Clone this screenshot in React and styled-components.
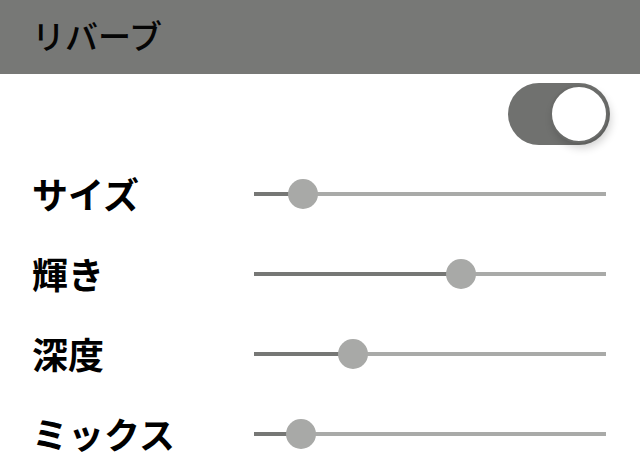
import React, { useState } from "react"
import styled, { createGlobalStyle } from "styled-components"

const GlobalStyle = createGlobalStyle`
  html, body {
    margin: 0;
    padding: 0;
    background: #ffffff;
    font-family: "Noto Sans CJK JP", "Noto Sans", sans-serif;
  }
`

const Screen = styled.div`
  width: 640px;
  height: 472px;
  overflow: hidden;
  background: #ffffff;
`

const Header = styled.header`
  height: 74px;
  background-color: #777876;
  display: flex;
  align-items: center;
  padding-left: 32px;
`

const Title = styled.h1`
  margin: 0;
  font-size: 33px;
  font-weight: 500;
  color: #050505;
  line-height: 1;
  padding-bottom: 3px;
`

const ToggleRow = styled.div`
  height: 80px;
  display: flex;
  align-items: center;
  justify-content: flex-end;
  padding-right: 30px;
`

const Switch = styled.button`
  position: relative;
  width: 102px;
  height: 62px;
  border: none;
  padding: 0;
  border-radius: 31px;
  background-color: ${(p) => (p.$on ? "#70716f" : "#c8c8c8")};
  cursor: pointer;
`

const Knob = styled.span`
  position: absolute;
  top: 2px;
  left: ${(p) => (p.$on ? "42px" : "2px")};
  width: 54px;
  height: 54px;
  border-radius: 50%;
  background: #ffffff;
  border: 2px solid #6a6b69;
  box-shadow: 3px 5px 8px rgba(0, 0, 0, 0.18);
`

const Row = styled.div`
  height: 80px;
  display: grid;
  grid-template-columns: 222px 1fr;
  align-items: center;
  padding: 0 34px 0 32px;
`

const Label = styled.span`
  font-size: 36px;
  font-weight: 700;
  color: #000000;
  line-height: 1;
  padding-bottom: 2px;
`

const Track = styled.div`
  position: relative;
  height: 4px;
  background-color: #a9aaa8;
`

const Fill = styled.div`
  height: 100%;
  background-color: #767775;
`

const Thumb = styled.div`
  position: absolute;
  top: 50%;
  width: 30px;
  height: 30px;
  margin-left: -15px;
  margin-top: -15px;
  border-radius: 50%;
  background-color: #a8a9a7;
`

const Slider = ({ value }) => (
  <Track>
    <Fill style={{ width: `${value}%` }} />
    <Thumb style={{ left: `${value}%` }} />
  </Track>
)

const params = [
  { name: "サイズ", value: 14 },
  { name: "輝き", value: 58.8 },
  { name: "深度", value: 28.1 },
  { name: "ミックス", value: 13.4 },
]

export default function App() {
  const [on, setOn] = useState(true)

  return (
    <Screen>
      <GlobalStyle />
      <Header>
        <Title>リバーブ</Title>
      </Header>
      <ToggleRow>
        <Switch $on={on} onClick={() => setOn(!on)}>
          <Knob $on={on} />
        </Switch>
      </ToggleRow>
      {params.map((p) => (
        <Row key={p.name}>
          <Label>{p.name}</Label>
          <Slider value={p.value} />
        </Row>
      ))}
    </Screen>
  )
}
